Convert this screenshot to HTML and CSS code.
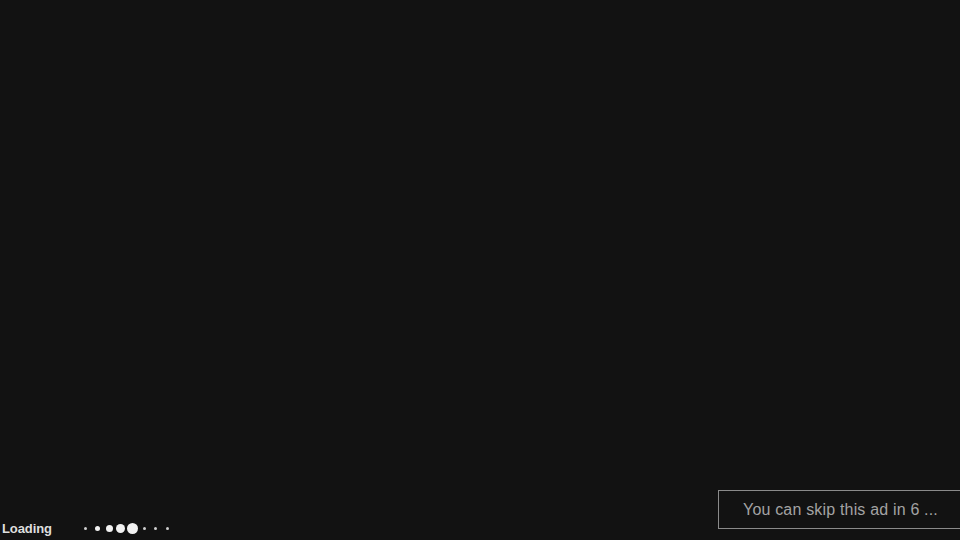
FILE: index.html
```html
<!DOCTYPE html>
<html>
<head>
<meta charset="utf-8">
<link rel="stylesheet" href="styles.css">
</head>
<body>
<div class="player">
  <div class="stage"></div>
  <div class="footer">
    <div class="loading">
      <span class="label">Loading</span>
      <div class="dots">
        <span class="cell"><i class="dot d1"></i></span>
        <span class="cell"><i class="dot d2"></i></span>
        <span class="cell"><i class="dot d3"></i></span>
        <span class="cell"><i class="dot d4"></i></span>
        <span class="cell"><i class="dot d5"></i></span>
        <span class="cell"><i class="dot d1"></i></span>
        <span class="cell"><i class="dot d1"></i></span>
        <span class="cell"><i class="dot d1"></i></span>
      </div>
    </div>
    <div class="skip">You can skip this ad in 6 ...</div>
  </div>
</div>
</body>
</html>
```

FILE: styles.css
```css
html, body {
  margin: 0;
  padding: 0;
  background: #121212;
  overflow: hidden;
}
.player {
  width: 960px;
  height: 540px;
  display: flex;
  flex-direction: column;
  overflow: hidden;
  font-family: "Liberation Sans", Arial, sans-serif;
}
.stage {
  flex: 1;
}
.footer {
  display: grid;
  grid-template-columns: 718px 252px;
  align-items: end;
  height: 50px;
}
.loading {
  display: flex;
  align-items: center;
  padding-left: 2px;
  height: 24px;
  align-self: end;
}
.label {
  font-size: 13px;
  font-weight: bold;
  color: #dedede;
  letter-spacing: -0.1px;
  width: 78px;
  line-height: 16px;
  position: relative;
  top: 1px;
}
.dots {
  display: flex;
  align-items: center;
  height: 24px;
}
.cell {
  width: 11.7px;
  display: flex;
  justify-content: center;
  align-items: center;
}
.dot {
  display: block;
  border-radius: 50%;
  background: #f2f2f2;
}
.d1 { width: 3px; height: 3px; background: #cfcfcf; }
.d2 { width: 5px; height: 5px; }
.d3 { width: 7px; height: 7px; }
.d4 { width: 9px; height: 9px; }
.d5 { width: 11px; height: 11px; }
.skip {
  box-sizing: border-box;
  height: 39px;
  margin-bottom: 11px;
  border: 1px solid #8a8a8a;
  border-right: none;
  padding: 0 0 0 24px;
  display: flex;
  align-items: center;
  font-size: 16px;
  letter-spacing: 0.18px;
  color: #a3a3a3;
  white-space: nowrap;
}
```
